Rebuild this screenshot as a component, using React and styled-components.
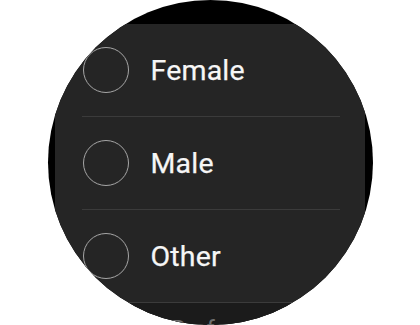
import styled, { createGlobalStyle } from 'styled-components';

const Global = createGlobalStyle`
	html, body {
		margin: 0;
		padding: 0;
		background: #fff;
	}
	body {
		font-family: Roboto, 'Liberation Sans', sans-serif;
	}
`;

const options = ['Female', 'Male', 'Other'];

export default function App() {
	return (
		<>
			<Global />
			<Stage>
				<Watch>
					<Panel>
						{options.map((label) => (
							<Row key={label}>
								<Radio />
								<Label>{label}</Label>
							</Row>
						))}
						<FadedRow>
							<Label $muted>Prefer not to say</Label>
						</FadedRow>
					</Panel>
				</Watch>
			</Stage>
		</>
	);
}

const Stage = styled.div`
	width: 420px;
	height: 325px;
	display: flex;
	justify-content: center;
	padding-left: 1px;
	box-sizing: border-box;
`;

const Watch = styled.div`
	width: 325px;
	height: 325px;
	border-radius: 50%;
	overflow: hidden;
	background: #000;
	padding: 24px 8px 0 7px;
	box-sizing: border-box;
`;

const Panel = styled.div`
	height: 100%;
	background: #252525;
	display: flex;
	flex-direction: column;
`;

const Row = styled.div`
	height: 92px;
	margin: 0 25px 0 27px;
	flex-shrink: 0;
	display: flex;
	align-items: center;
	gap: 22px;
	border-bottom: 1px solid #3b3b3b;
`;

const FadedRow = styled.div`
	flex: 1;
	background: #1b1b1b;
	padding: 12px 0 0 115px;
`;

const Radio = styled.span`
	width: 44px;
	height: 44px;
	border-radius: 50%;
	border: 1.8px solid #a6a6a6;
	flex-shrink: 0;
	margin-left: 0.5px;
`;

const Label = styled.span`
	font-size: ${(p) => (p.$muted ? '24px' : '28.5px')};
	color: ${(p) => (p.$muted ? '#6e6e6e' : '#f6f6f6')};
	letter-spacing: 0.2px;
	white-space: nowrap;
	-webkit-text-stroke: ${(p) => (p.$muted ? '0' : '0.25px #f6f6f6')};
`;
